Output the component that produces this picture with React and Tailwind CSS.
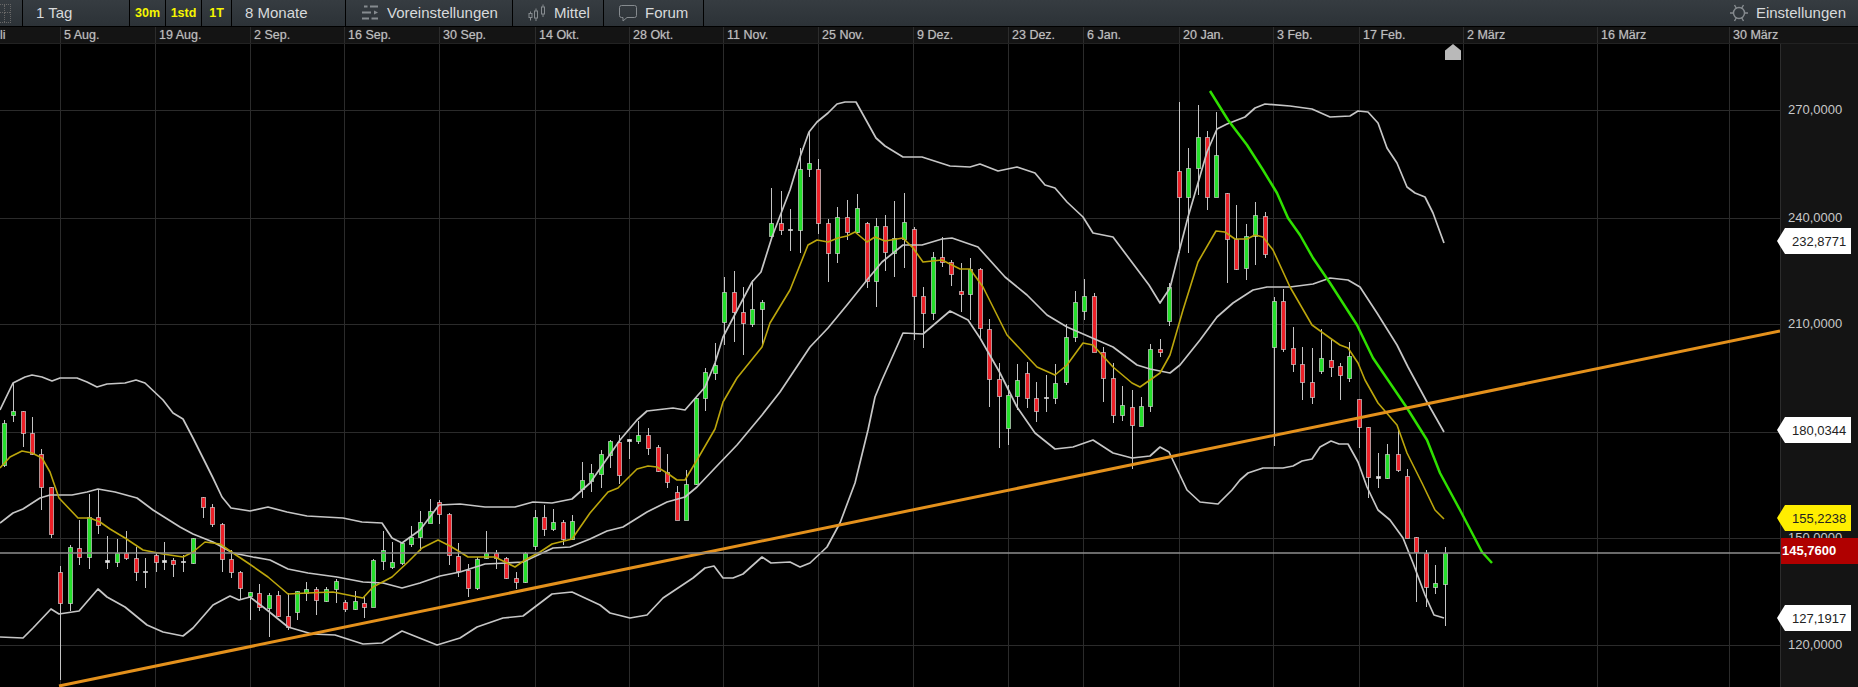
import { Fragment } from 'react';

const gridX = [60, 155, 250, 344, 439, 535, 629, 723, 818, 913, 1008, 1083, 1179, 1273, 1359, 1463, 1597, 1729];
const gridY = [110, 218, 324, 432, 538, 645];
const dates = ['5 Aug.', '19 Aug.', '2 Sep.', '16 Sep.', '30 Sep.', '14 Okt.', '28 Okt.', '11 Nov.', '25 Nov.', '9 Dez.', '23 Dez.', '6 Jan.', '20 Jan.', '3 Feb.', '17 Feb.', '2 März', '16 März', '30 März'];

const axisLabels = [
  { y: 110, text: '270,0000' },
  { y: 218, text: '240,0000' },
  { y: 324, text: '210,0000' },
  { y: 538, text: '150,0000' },
  { y: 645, text: '120,0000' },
];

const tags = [
  { y: 241, text: '232,8771', cls: 'bg-white text-[#222]' },
  { y: 430, text: '180,0344', cls: 'bg-white text-[#222]' },
  { y: 518, text: '155,2238', cls: 'bg-[#ffee00] text-[#222]' },
  { y: 618, text: '127,1917', cls: 'bg-white text-[#222]' },
];

// x, high, body top, body bottom, low, kind
const candles = [
  [4, 420, 423, 465, 467, 'g'], [13, 383, 411, 415, 422, 'g'], [23, 411, 411, 433, 447, 'r'], [32, 417, 433, 454, 455, 'r'],
  [41, 449, 454, 487, 510, 'r'], [51, 487, 487, 534, 538, 'r'], [60, 566, 572, 603, 680, 'r'], [70, 545, 547, 603, 611, 'g'],
  [79, 520, 548, 557, 565, 'r'], [89, 494, 517, 557, 569, 'g'], [98, 490, 517, 525, 534, 'r'], [107, 536, 560, 562, 569, 'w'],
  [117, 539, 553, 562, 567, 'g'], [126, 531, 553, 558, 560, 'r'], [136, 547, 558, 572, 581, 'r'], [145, 558, 571, 572, 588, 'w'],
  [156, 553, 555, 562, 572, 'r'], [164, 542, 560, 562, 570, 'w'], [173, 558, 560, 564, 577, 'r'], [183, 555, 561, 562, 572, 'w'],
  [193, 538, 538, 563, 564, 'g'], [203, 497, 497, 507, 518, 'r'], [212, 504, 507, 524, 527, 'r'], [222, 523, 524, 559, 572, 'r'],
  [231, 550, 559, 572, 578, 'r'], [240, 571, 572, 588, 600, 'r'], [250, 592, 592, 596, 620, 'g'], [259, 584, 593, 607, 611, 'r'],
  [269, 593, 595, 608, 637, 'g'], [278, 591, 595, 616, 617, 'r'], [288, 593, 616, 627, 630, 'r'], [297, 591, 591, 612, 620, 'g'],
  [306, 582, 589, 593, 601, 'g'], [316, 587, 589, 600, 615, 'r'], [326, 587, 589, 601, 602, 'g'], [336, 579, 581, 589, 603, 'g'],
  [345, 600, 602, 609, 612, 'r'], [355, 591, 601, 609, 610, 'g'], [364, 597, 603, 607, 618, 'r'], [373, 559, 560, 607, 607, 'g'],
  [383, 531, 550, 561, 570, 'g'], [392, 542, 562, 567, 569, 'g'], [402, 542, 543, 563, 565, 'g'], [411, 526, 537, 544, 547, 'g'],
  [420, 511, 522, 537, 551, 'g'], [430, 499, 511, 523, 523, 'g'], [439, 500, 502, 514, 524, 'r'], [449, 513, 514, 555, 565, 'r'],
  [458, 543, 556, 571, 577, 'r'], [468, 564, 570, 588, 597, 'r'], [477, 557, 559, 588, 590, 'g'], [486, 531, 553, 558, 559, 'g'],
  [496, 550, 553, 558, 569, 'r'], [506, 557, 558, 578, 579, 'r'], [516, 572, 578, 582, 589, 'r'], [525, 552, 553, 582, 583, 'g'],
  [535, 510, 517, 546, 550, 'g'], [544, 505, 517, 529, 536, 'r'], [553, 509, 522, 529, 531, 'g'], [563, 520, 522, 539, 545, 'r'],
  [572, 515, 521, 539, 540, 'g'], [582, 462, 480, 489, 498, 'g'], [591, 464, 473, 481, 492, 'g'], [601, 450, 454, 474, 488, 'g'],
  [610, 440, 441, 455, 468, 'g'], [619, 435, 442, 475, 484, 'r'], [629, 439, 439, 441, 459, 'w'], [638, 421, 435, 441, 444, 'g'],
  [648, 428, 435, 448, 455, 'r'], [658, 445, 447, 471, 472, 'r'], [667, 454, 472, 482, 488, 'r'], [677, 486, 492, 520, 520, 'r'],
  [686, 470, 484, 520, 520, 'g'], [696, 398, 398, 484, 485, 'g'], [705, 368, 372, 398, 411, 'g'], [715, 343, 365, 373, 380, 'g'],
  [724, 277, 292, 322, 345, 'g'], [734, 271, 292, 312, 342, 'r'], [743, 287, 312, 323, 355, 'r'], [752, 280, 309, 324, 327, 'g'],
  [762, 300, 302, 309, 345, 'g'], [771, 188, 223, 236, 237, 'g'], [781, 191, 223, 230, 235, 'r'], [790, 209, 229, 230, 251, 'w'],
  [800, 148, 169, 230, 253, 'g'], [809, 132, 163, 169, 177, 'g'], [818, 159, 169, 223, 234, 'r'], [828, 219, 223, 253, 282, 'r'],
  [837, 207, 217, 253, 263, 'g'], [847, 200, 217, 232, 240, 'r'], [857, 194, 208, 232, 233, 'g'], [867, 222, 223, 281, 288, 'r'],
  [876, 218, 226, 281, 307, 'g'], [885, 215, 226, 252, 271, 'r'], [894, 201, 238, 253, 277, 'g'], [904, 193, 222, 239, 268, 'g'],
  [914, 227, 229, 296, 340, 'r'], [923, 287, 296, 313, 348, 'r'], [933, 252, 257, 313, 320, 'g'], [942, 237, 257, 262, 267, 'r'],
  [951, 260, 262, 274, 286, 'r'], [961, 263, 291, 294, 312, 'r'], [970, 258, 269, 294, 320, 'g'], [980, 268, 269, 328, 338, 'r'],
  [989, 319, 329, 379, 407, 'r'], [999, 363, 379, 396, 448, 'r'], [1008, 385, 395, 428, 445, 'g'], [1017, 364, 380, 396, 410, 'g'],
  [1027, 362, 373, 398, 408, 'r'], [1036, 382, 398, 411, 422, 'r'], [1046, 375, 397, 398, 412, 'w'], [1055, 364, 383, 398, 404, 'g'],
  [1066, 324, 337, 382, 385, 'g'], [1075, 291, 302, 337, 342, 'g'], [1084, 279, 296, 311, 320, 'g'], [1094, 293, 296, 352, 352, 'r'],
  [1103, 347, 352, 378, 402, 'r'], [1113, 363, 378, 415, 423, 'r'], [1122, 386, 405, 415, 421, 'g'], [1132, 390, 407, 425, 469, 'r'],
  [1141, 397, 406, 426, 426, 'g'], [1150, 344, 349, 406, 412, 'g'], [1160, 339, 349, 352, 357, 'r'], [1169, 283, 287, 321, 326, 'g'],
  [1179, 102, 171, 197, 253, 'r'], [1188, 148, 168, 197, 253, 'g'], [1198, 105, 137, 168, 195, 'g'], [1207, 131, 137, 197, 210, 'r'],
  [1216, 112, 155, 197, 197, 'g'], [1227, 193, 193, 239, 283, 'r'], [1236, 205, 239, 269, 270, 'r'], [1246, 224, 236, 268, 280, 'g'],
  [1255, 202, 215, 236, 265, 'g'], [1265, 212, 216, 254, 258, 'r'], [1274, 297, 301, 347, 446, 'g'], [1283, 289, 301, 349, 352, 'r'],
  [1293, 327, 348, 364, 372, 'r'], [1302, 347, 364, 382, 400, 'r'], [1312, 348, 382, 397, 404, 'r'], [1321, 329, 358, 371, 374, 'g'],
  [1331, 340, 360, 367, 377, 'r'], [1340, 363, 366, 375, 400, 'r'], [1349, 342, 356, 378, 382, 'g'], [1359, 399, 399, 427, 448, 'r'],
  [1368, 427, 427, 477, 498, 'r'], [1378, 453, 476, 478, 488, 'w'], [1387, 444, 454, 478, 479, 'g'], [1398, 430, 454, 470, 472, 'r'],
  [1407, 469, 476, 538, 538, 'r'], [1416, 537, 537, 552, 602, 'r'], [1426, 550, 553, 587, 607, 'r'], [1435, 565, 583, 587, 594, 'g'],
  [1445, 547, 553, 584, 626, 'g'],
];

const upperBand = '0,410 13,383 25,377 32,375 42,377 52,381 60,378 77,378 87,382 97,387 107,384 125,383 136,380 145,383 163,400 173,413 183,419 193,438 203,458 213,478 222,497 231,508 250,511 268,507 287,512 307,516 343,518 362,522 382,523 392,538 402,543 420,530 439,505 460,504 485,507 515,507 533,502 552,503 572,499 590,483 620,440 637,420 647,411 673,408 685,410 705,387 715,363 723,337 752,282 761,272 772,237 790,190 800,157 809,132 817,122 828,113 837,104 845,102 856,102 876,138 885,146 903,157 922,157 950,166 970,167 980,164 998,171 1017,167 1035,173 1045,185 1055,188 1067,202 1083,217 1093,233 1113,237 1149,285 1160,303 1170,288 1179,252 1188,217 1198,183 1207,152 1217,129 1227,124 1245,117 1255,108 1265,104 1290,106 1312,109 1330,117 1350,116 1358,111 1368,112 1378,123 1387,148 1397,163 1407,187 1415,193 1425,197 1433,213 1444,243';
const middleBand = '0,523 13,513 23,509 40,498 50,495 72,495 87,492 98,489 115,492 137,498 153,510 180,527 193,534 213,542 233,553 253,557 270,560 288,569 308,573 337,577 363,582 383,583 402,588 420,583 440,576 460,572 485,564 507,563 523,562 553,548 570,547 590,539 607,531 623,527 647,512 667,502 685,497 697,487 715,468 737,445 762,415 780,392 788,380 810,347 828,328 847,305 867,280 882,262 903,245 922,245 942,239 952,238 978,247 1005,277 1027,295 1047,315 1067,327 1090,337 1113,347 1137,365 1150,369 1170,373 1180,365 1200,340 1217,317 1233,303 1253,290 1267,287 1290,287 1313,284 1330,278 1348,280 1360,287 1377,313 1397,345 1408,367 1427,402 1444,432';
const lowerBand = '0,637 23,638 33,628 51,609 59,614 79,611 98,589 107,597 125,607 147,625 163,632 183,636 193,628 213,605 230,596 239,600 250,597 267,610 288,627 312,634 335,635 363,644 382,643 402,631 417,637 437,645 460,638 477,627 503,618 523,616 552,594 572,592 600,605 610,613 630,618 647,615 663,598 693,578 705,568 714,566 723,578 733,578 743,574 762,557 771,563 790,562 800,567 810,563 827,547 840,523 855,483 868,430 875,397 882,380 903,333 923,334 950,311 968,320 980,338 1000,373 1017,407 1035,433 1055,449 1073,447 1093,440 1113,453 1132,458 1150,456 1160,447 1169,452 1187,490 1200,502 1218,504 1232,490 1240,480 1248,473 1263,468 1283,468 1293,466 1302,461 1312,459 1320,447 1331,441 1339,444 1348,444 1358,462 1367,487 1378,510 1390,520 1403,538 1413,563 1425,595 1434,615 1444,618';
const average = '0,468 10,457 22,451 32,453 42,458 50,472 59,498 78,518 90,518 100,522 110,529 125,538 143,550 163,554 183,557 193,552 205,542 220,544 233,553 248,563 268,577 288,594 307,593 333,592 343,594 363,598 373,587 392,577 408,562 422,548 438,540 450,546 460,552 468,557 495,557 515,567 525,560 540,552 552,544 572,539 590,513 608,492 618,488 637,469 648,466 657,467 667,473 677,480 685,480 697,460 715,429 723,402 737,378 762,347 770,323 790,290 808,245 817,240 828,242 838,238 847,236 855,232 867,242 875,237 885,241 903,238 913,248 923,262 942,260 960,269 970,269 983,287 1007,335 1037,367 1055,375 1067,365 1083,343 1093,345 1113,367 1132,383 1140,387 1160,373 1170,355 1183,310 1198,262 1216,231 1225,232 1235,239 1247,239 1255,235 1263,237 1273,250 1290,287 1312,325 1330,338 1340,345 1348,348 1358,363 1365,380 1378,403 1397,425 1407,453 1422,483 1435,510 1444,519';
const trendDown = '1210,91 1228,120 1247,145 1263,170 1277,193 1288,218 1300,235 1313,258 1330,283 1357,325 1373,358 1407,408 1427,440 1440,473 1460,510 1482,552 1492,563';

const candleFill = { g: '#25e02b', r: '#ee2028', w: '#e8e8e8' };

const ToolbarCell = ({ className = '', children }) => (
  <div className={`flex h-full items-center border-r border-black ${className}`}>{children}</div>
);

const PresetIcon = () => (
  <svg width="18" height="16" viewBox="0 0 18 16" fill="none" stroke="#868b8f" strokeWidth="1.8" className="mr-[8px]">
    <path d="M3 1.500h3.500M9 1.500h8M1 7.500h9M1 13.500h7M10.500 13.500h6.500" />
    <path d="M13 5.500l4 2-4 2z" fill="#868b8f" stroke="none" />
  </svg>
);

const CandleIcon = () => (
  <svg width="18" height="18" viewBox="0 0 18 18" fill="none" stroke="#868b8f" strokeWidth="1" className="mr-[8px]">
    <rect x="1" y="9.500" width="3" height="4" />
    <path d="M2.500 7.500v2M2.500 13.500v3" />
    <rect x="6.500" y="7" width="3" height="7" />
    <path d="M8 4.500V7M8 14v3" />
    <rect x="13.500" y="3" width="3" height="7" />
    <path d="M15 .5V3M15 10v3" />
  </svg>
);

const BubbleIcon = () => (
  <svg width="18" height="18" viewBox="0 0 18 18" fill="none" stroke="#868b8f" strokeWidth="1" className="mr-[8px]">
    <path d="M2.500 1.500h13a2 2 0 0 1 2 2v8a2 2 0 0 1-2 2H8l-4 3.500v-3.500H2.500a2 2 0 0 1-2-2v-8a2 2 0 0 1 2-2z" />
  </svg>
);

const GearIcon = () => (
  <svg width="18" height="18" viewBox="0 0 18 18" fill="none" stroke="#868b8f" strokeWidth="1.4" className="mr-[8px]">
    <circle cx="9" cy="9" r="5.500" />
    <path d="M0 9h3.500M14.500 9H18M4.500 1l2 3.500M13.500 1l-2 3.500M4.500 17l2-3.500M13.500 17l-2-3.500" />
  </svg>
);

const Toolbar = () => (
  <div className="flex h-[27px] items-center border-b border-black bg-gradient-to-b from-[#363c41] to-[#2c3237] text-[15px] text-[#d8dadb]">
    <ToolbarCell className="w-[23px]">
      <div className="ml-[-1px] grid h-[19px] w-[12px] grid-cols-2 grid-rows-2 border border-dotted border-[#666]">
        <div className="border-b border-r border-dotted border-[#666]" />
        <div className="border-b border-dotted border-[#666]" />
        <div className="border-r border-dotted border-[#666]" />
      </div>
    </ToolbarCell>
    <ToolbarCell className="w-[107px] pl-[13px]">1 Tag</ToolbarCell>
    <ToolbarCell className="w-[36px] justify-center text-[12.5px] font-bold text-[#f6f600]">30m</ToolbarCell>
    <ToolbarCell className="w-[36px] justify-center text-[12.5px] font-bold text-[#f6f600]">1std</ToolbarCell>
    <ToolbarCell className="w-[30px] justify-center text-[12.5px] font-bold text-[#f6f600]">1T</ToolbarCell>
    <ToolbarCell className="w-[114px] pl-[13px]">8 Monate</ToolbarCell>
    <ToolbarCell className="w-[167px] pl-[15px]"><PresetIcon />Voreinstellungen</ToolbarCell>
    <ToolbarCell className="w-[91px] pl-[15px]"><CandleIcon />Mittel</ToolbarCell>
    <ToolbarCell className="w-[100px] pl-[15px]"><BubbleIcon />Forum</ToolbarCell>
    <div className="ml-auto flex items-center pr-[12px]"><GearIcon />Einstellungen</div>
  </div>
);

const DateAxis = () => (
  <div className="flex h-[17px] border-b border-[#222] bg-[#141414] text-[12.5px] leading-[16px] text-[#bdbdbd] [text-shadow:0_0_1px_#777]">
    <div className="w-[60px] shrink-0">li</div>
    {dates.map((date, i) => (
      <div
        key={date}
        className="shrink-0 border-l border-[#2c2c2c] pl-[3px]"
        style={{ width: (gridX[i + 1] ?? 1780) - gridX[i] }}
      >
        {date}
      </div>
    ))}
  </div>
);

const Chart = () => (
  <svg viewBox="0 44 1780 643" className="h-full w-[1780px] shrink-0 bg-black">
    {gridX.map((x) => (
      <line key={x} x1={x + 0.5} x2={x + 0.5} y1="44" y2="687" stroke="#2b2b2b" />
    ))}
    {gridY.map((y) => (
      <line key={y} x1="0" x2="1780" y1={y + 0.5} y2={y + 0.5} stroke="#2b2b2b" />
    ))}

    {candles.map(([x, high, top, bottom, low, kind]) => (
      <Fragment key={x}>
        <line x1={x + 0.5} x2={x + 0.5} y1={high} y2={low} stroke="#c4c4c4" />
        <rect
          x={x - 1.5}
          y={top + 0.5}
          width="4"
          height={Math.max(bottom - top, 1)}
          fill={candleFill[kind]}
          stroke="#d8d8d8"
          strokeOpacity="0.65"
        />
      </Fragment>
    ))}

    <polyline points={upperBand} fill="none" stroke="#c6c6c6" strokeWidth="1.7" strokeLinejoin="round" />
    <polyline points={middleBand} fill="none" stroke="#c6c6c6" strokeWidth="1.7" strokeLinejoin="round" />
    <polyline points={lowerBand} fill="none" stroke="#c6c6c6" strokeWidth="1.7" strokeLinejoin="round" />
    <polyline points={average} fill="none" stroke="#bca60c" strokeWidth="1.6" strokeLinejoin="round" />
    <polyline points={trendDown} fill="none" stroke="#2fe000" strokeWidth="2.5" strokeLinejoin="round" />
    <line x1="59" y1="686" x2="1780" y2="331" stroke="#e4911c" strokeWidth="3" />
    <line x1="0" x2="1780" y1="553" y2="553" stroke="#8e8e8e" strokeWidth="1.4" />

    <path d="M1453 44l8 6.500V60h-16V50.500z" fill="#b9b9b9" />
  </svg>
);

const PriceAxis = () => (
  <div className="relative h-full flex-1 border-l border-[#2c2c2c] bg-[#141414] text-[13px] leading-[16px]">
    {axisLabels.map(({ y, text }) => (
      <span key={text} className="absolute left-[7px] text-[#c8c8c8]" style={{ top: y - 52 }}>
        {text}
      </span>
    ))}
    {tags.map(({ y, text, cls }) => (
      <div
        key={text}
        className={`absolute left-[-4px] flex h-[26px] w-[74px] items-center pl-[15px] pt-[1px] [clip-path:polygon(0_50%,8px_0,100%_0,100%_100%,8px_100%)] ${cls}`}
        style={{ top: y - 57 }}
      >
        {text}
      </div>
    ))}
    <div className="absolute inset-x-0 top-[494px] flex h-[26px] items-center bg-[#b00000] pl-[1px] font-bold text-white">
      145,7600
    </div>
  </div>
);

export default function App() {
  return (
    <div className="flex h-screen w-full flex-col overflow-hidden bg-black font-['Liberation_Sans',Arial,sans-serif]">
      <Toolbar />
      <DateAxis />
      <div className="flex min-h-0 flex-1">
        <Chart />
        <PriceAxis />
      </div>
    </div>
  );
}
